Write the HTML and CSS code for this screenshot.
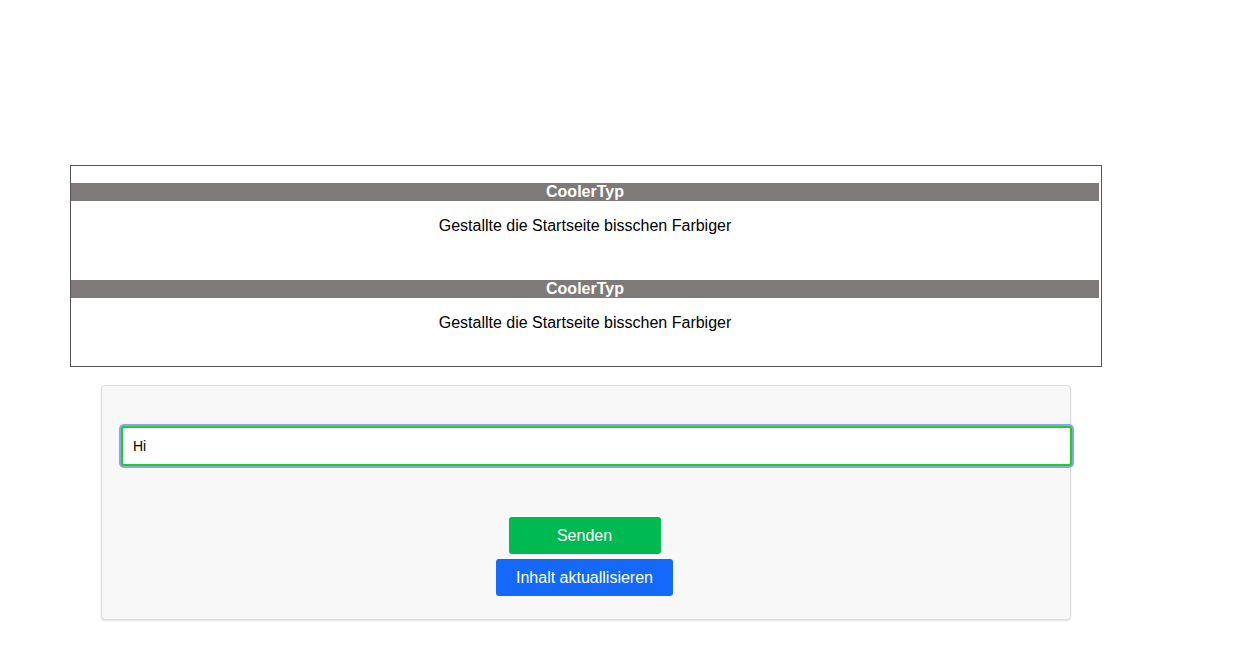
FILE: index.html
```html
<!DOCTYPE html>
<html lang="de">
<head>
    <meta charset="UTF-8">
    <meta name="viewport" content="width=device-width, initial-scale=1">
    <title>Chat</title>
    <link rel="stylesheet" href="styles.css">
</head>
<body>
    <div class="messages">
        <div class="message">
            <div class="message-user">CoolerTyp</div>
            <p class="message-text">Gestallte die Startseite bisschen Farbiger</p>
        </div>
        <div class="message">
            <div class="message-user">CoolerTyp</div>
            <p class="message-text">Gestallte die Startseite bisschen Farbiger</p>
        </div>
    </div>
    <div class="form-card">
        <input class="msg-input" type="text" value="Hi">
        <div class="actions">
            <button class="btn btn-green">Senden</button>
            <button class="btn btn-blue">Inhalt aktuallisieren</button>
        </div>
    </div>
</body>
</html>
```

FILE: styles.css
```css
*{
    margin: 0;
    padding: 0;
    box-sizing: border-box;
}
html, body{
    background: #fff;
}
body{
    font-family: "Liberation Sans", Arial, sans-serif;
    font-size: 16px;
    color: #000;
    padding: 165px 0 40px 70px;
}

.messages{
    width: 1032px;
    border: 1px solid #555;
    padding-bottom: 6px;
}
.message{
    padding: 17px 2px 12px 0;
}
.message-user{
    height: 18px;
    line-height: 18px;
    background: #7e7a79;
    color: #fff;
    font-weight: bold;
    text-align: center;
}
.message-text{
    margin: 16px 0;
    line-height: 18px;
    text-align: center;
}

.form-card{
    width: 970px;
    margin: 18px 0 0 31px;
    padding: 40px 0 23px 19px;
    background: #f8f8f8;
    border: 1px solid #ddd;
    border-radius: 4px;
    box-shadow: 0 1px 2px rgba(0,0,0,0.12);
}
.msg-input{
    display: block;
    width: 951px;
    height: 40px;
    padding: 0 10px;
    border: 2px solid #1fd11f;
    border-radius: 3px;
    outline: none;
    box-shadow: 0 0 0 2px #8ea1f7;
    font-family: "Liberation Sans", Arial, sans-serif;
    font-size: 14px;
    color: #000;
    background: #fff;
}
.actions{
    display: flex;
    flex-direction: column;
    align-items: center;
    gap: 5px;
    margin: 51px 0 0 -22px;
}
.btn{
    height: 37px;
    border: none;
    border-radius: 3px;
    color: #fff;
    font-family: "Liberation Sans", Arial, sans-serif;
    font-size: 16px;
}
.btn-green{
    width: 152px;
    background: #00b953;
}
.btn-blue{
    width: 177px;
    background: #1469fb;
}
```
